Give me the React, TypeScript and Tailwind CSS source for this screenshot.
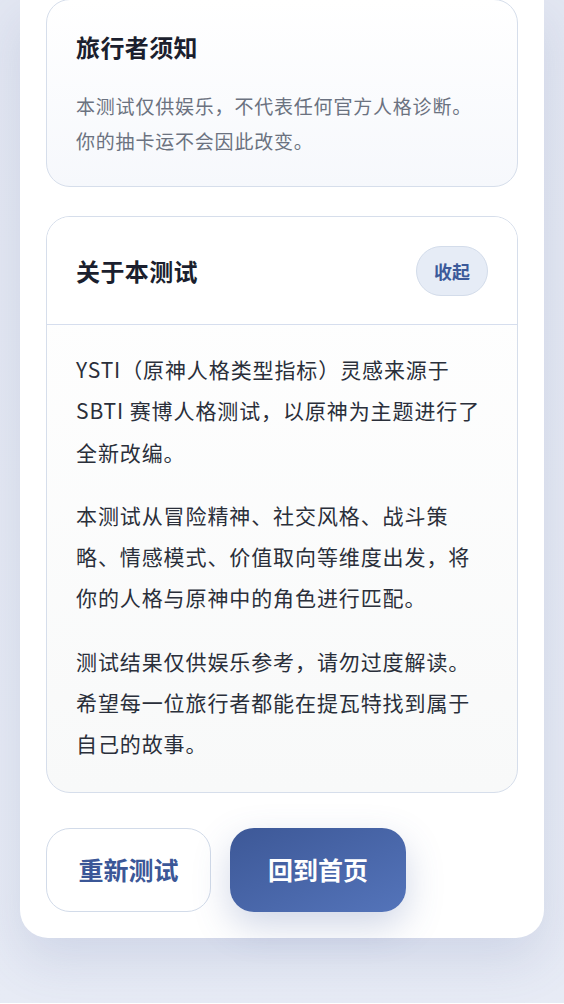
import React, { useState } from "react";

const CJK = "font-['Noto_Sans_CJK_SC','Noto_Sans',sans-serif]";

function NoticeCard() {
  return (
    <section className="-mt-px rounded-[24px] border border-[#d6deeb] bg-gradient-to-b from-white to-[#f6f8fc] px-[29px] pt-[31px] pb-[28px]">
      <h2 className="text-[24px] font-bold leading-[32px] tracking-[0.4px] text-[#1b1f2e]">旅行者须知</h2>
      <p className="mt-[25px] text-[19px] leading-[35px] tracking-[0.8px] text-[#6b7280]">
        本测试仅供娱乐，不代表任何官方人格诊断。你的抽卡运不会因此改变。
      </p>
    </section>
  );
}

function AboutCard() {
  const [open, setOpen] = useState(true);
  const paragraphs = [
    "YSTI（原神人格类型指标）灵感来源于 SBTI 赛博人格测试，以原神为主题进行了全新改编。",
    "本测试从冒险精神、社交风格、战斗策略、情感模式、价值取向等维度出发，将你的人格与原神中的角色进行匹配。",
    "测试结果仅供娱乐参考，请勿过度解读。希望每一位旅行者都能在提瓦特找到属于自己的故事。",
  ];
  return (
    <section className="mt-[29px] overflow-hidden rounded-[24px] border border-[#d6deeb] bg-gradient-to-b from-white to-[#f8f9f9]">
      <header className="flex items-center justify-between border-b border-[#d6deee] bg-white px-[29px] pt-[29px] pb-[28px]">
        <h2 className="text-[24px] font-bold leading-[32px] tracking-[0.4px] text-[#1b1f2e]">关于本测试</h2>
        <button
          onClick={() => setOpen(!open)}
          className="flex h-[50px] w-[72px] items-center justify-center rounded-full border border-[#d3dcea] bg-[#e6ecf6] text-[18px] font-bold text-[#3c5a9a]"
        >
          {open ? "收起" : "展开"}
        </button>
      </header>
      {open && (
        <div className="flex flex-col gap-[22px] px-[29px] pt-[24px] pb-[27px]">
          {paragraphs.map((t) => (
            <p key={t} className="text-[21px] leading-[41.3px] tracking-[0.9px] text-[#2a2f3a]">
              {t}
            </p>
          ))}
        </div>
      )}
    </section>
  );
}

export default function App() {
  return (
    <div className={`min-h-screen bg-gradient-to-b from-[#e3e7f2] to-[#e7ebf5] px-5 pb-16 ${CJK}`}>
      <main className="rounded-b-[28px] bg-white px-[26px] pb-[26px] shadow-[0_22px_50px_rgba(90,108,160,0.16)]">
        <NoticeCard />
        <AboutCard />
        <div className="mt-[35px] flex items-center gap-[19px]">
          <button className="flex h-[84px] w-[165px] items-center justify-center rounded-[24px] border-[1.5px] border-[#d2dbe9] bg-white text-[25px] font-bold text-[#3b5797]">
            重新测试
          </button>
          <button className="flex h-[84px] w-[176px] items-center justify-center rounded-[24px] bg-gradient-to-br from-[#3d5897] to-[#5474ba] text-[25px] font-bold text-white shadow-[0_14px_36px_rgba(70,95,160,0.25)]">
            回到首页
          </button>
        </div>
      </main>
    </div>
  );
}
